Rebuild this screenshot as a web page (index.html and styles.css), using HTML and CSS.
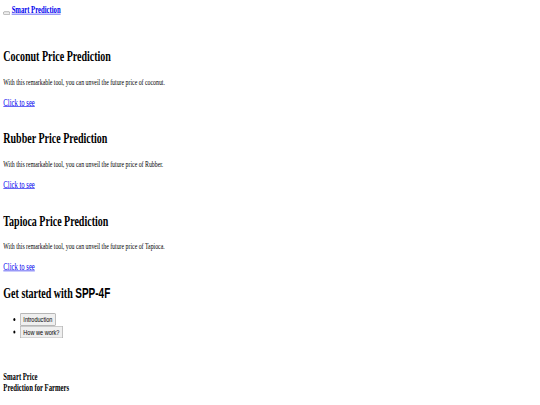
FILE: index.html
```html
<!DOCTYPE html>
<html lang="en">
<head>
<meta charset="utf-8">
<title>Smart Prediction</title>
<link rel="stylesheet" href="styles.css">
</head>
<body>
<div class="viewport">
<div class="page">
  <nav class="nav">
    <button class="toggler" type="button"><span class="toggler-icon"></span></button>
    <a class="brand" href="#"><b>Smart Prediction</b></a>
  </nav>
  <main class="cards">
    <section class="card">
      <h2 class="card-title">Coconut Price Prediction</h2>
      <p class="card-text">With this remarkable tool, you can unveil the future price of coconut.</p>
      <a class="card-link" href="#">Click to see</a>
    </section>
    <section class="card">
      <h2 class="card-title">Rubber Price Prediction</h2>
      <p class="card-text">With this remarkable tool, you can unveil the future price of Rubber.</p>
      <a class="card-link" href="#">Click to see</a>
    </section>
    <section class="card card-last">
      <h2 class="card-title">Tapioca Price Prediction</h2>
      <p class="card-text">With this remarkable tool, you can unveil the future price of Tapioca.</p>
      <a class="card-link" href="#">Click to see</a>
    </section>
  </main>
  <section class="start">
    <h2 class="start-title">Get started with <span class="code">SPP-4F</span></h2>
    <ul class="start-list">
      <li><button class="btn" type="button">Introduction</button></li>
      <li><button class="btn" type="button">How we work?</button></li>
    </ul>
  </section>
  <footer class="footer">
    <h4 class="footer-title">Smart Price<br>Prediction for Farmers</h4>
  </footer>
</div>
</div>
</body>
</html>
```
FILE: styles.css
```css
html, body {
  margin: 0;
  background: #ffffff;
}

.viewport {
  width: 540px;
  height: 405px;
  overflow: hidden;
}

.page {
  width: 1296px;
  box-sizing: border-box;
  padding: 8px;
  font-family: "Liberation Serif", "Times New Roman", serif;
  font-size: 16px;
  color: #000000;
  transform: scale(0.41667, 0.6);
  transform-origin: 0 0;
}

a {
  color: #0000ee;
}

.toggler {
  padding: 1px 6px;
  vertical-align: baseline;
}

.cards {
  margin-top: 55px;
}

.card {
  padding-bottom: 18px;
}

.card-last {
  padding-bottom: 0;
}

.card-title,
.start-title {
  font-size: 24px;
  font-weight: bold;
  margin: 19.92px 0;
}

.card-text {
  font-size: 14px;
  margin: 21.07px 0 17.15px;
}

.code {
  font-family: "Liberation Sans", Arial, sans-serif;
}

.start-list {
  margin: 16px 0;
  padding-left: 40px;
}

.btn {
  font-family: "Liberation Sans", Arial, sans-serif;
  font-size: 13.333px;
}

.footer {
  padding-top: 40px;
}

.footer-title {
  margin: 0;
  font-size: 16px;
  font-weight: bold;
}
```
